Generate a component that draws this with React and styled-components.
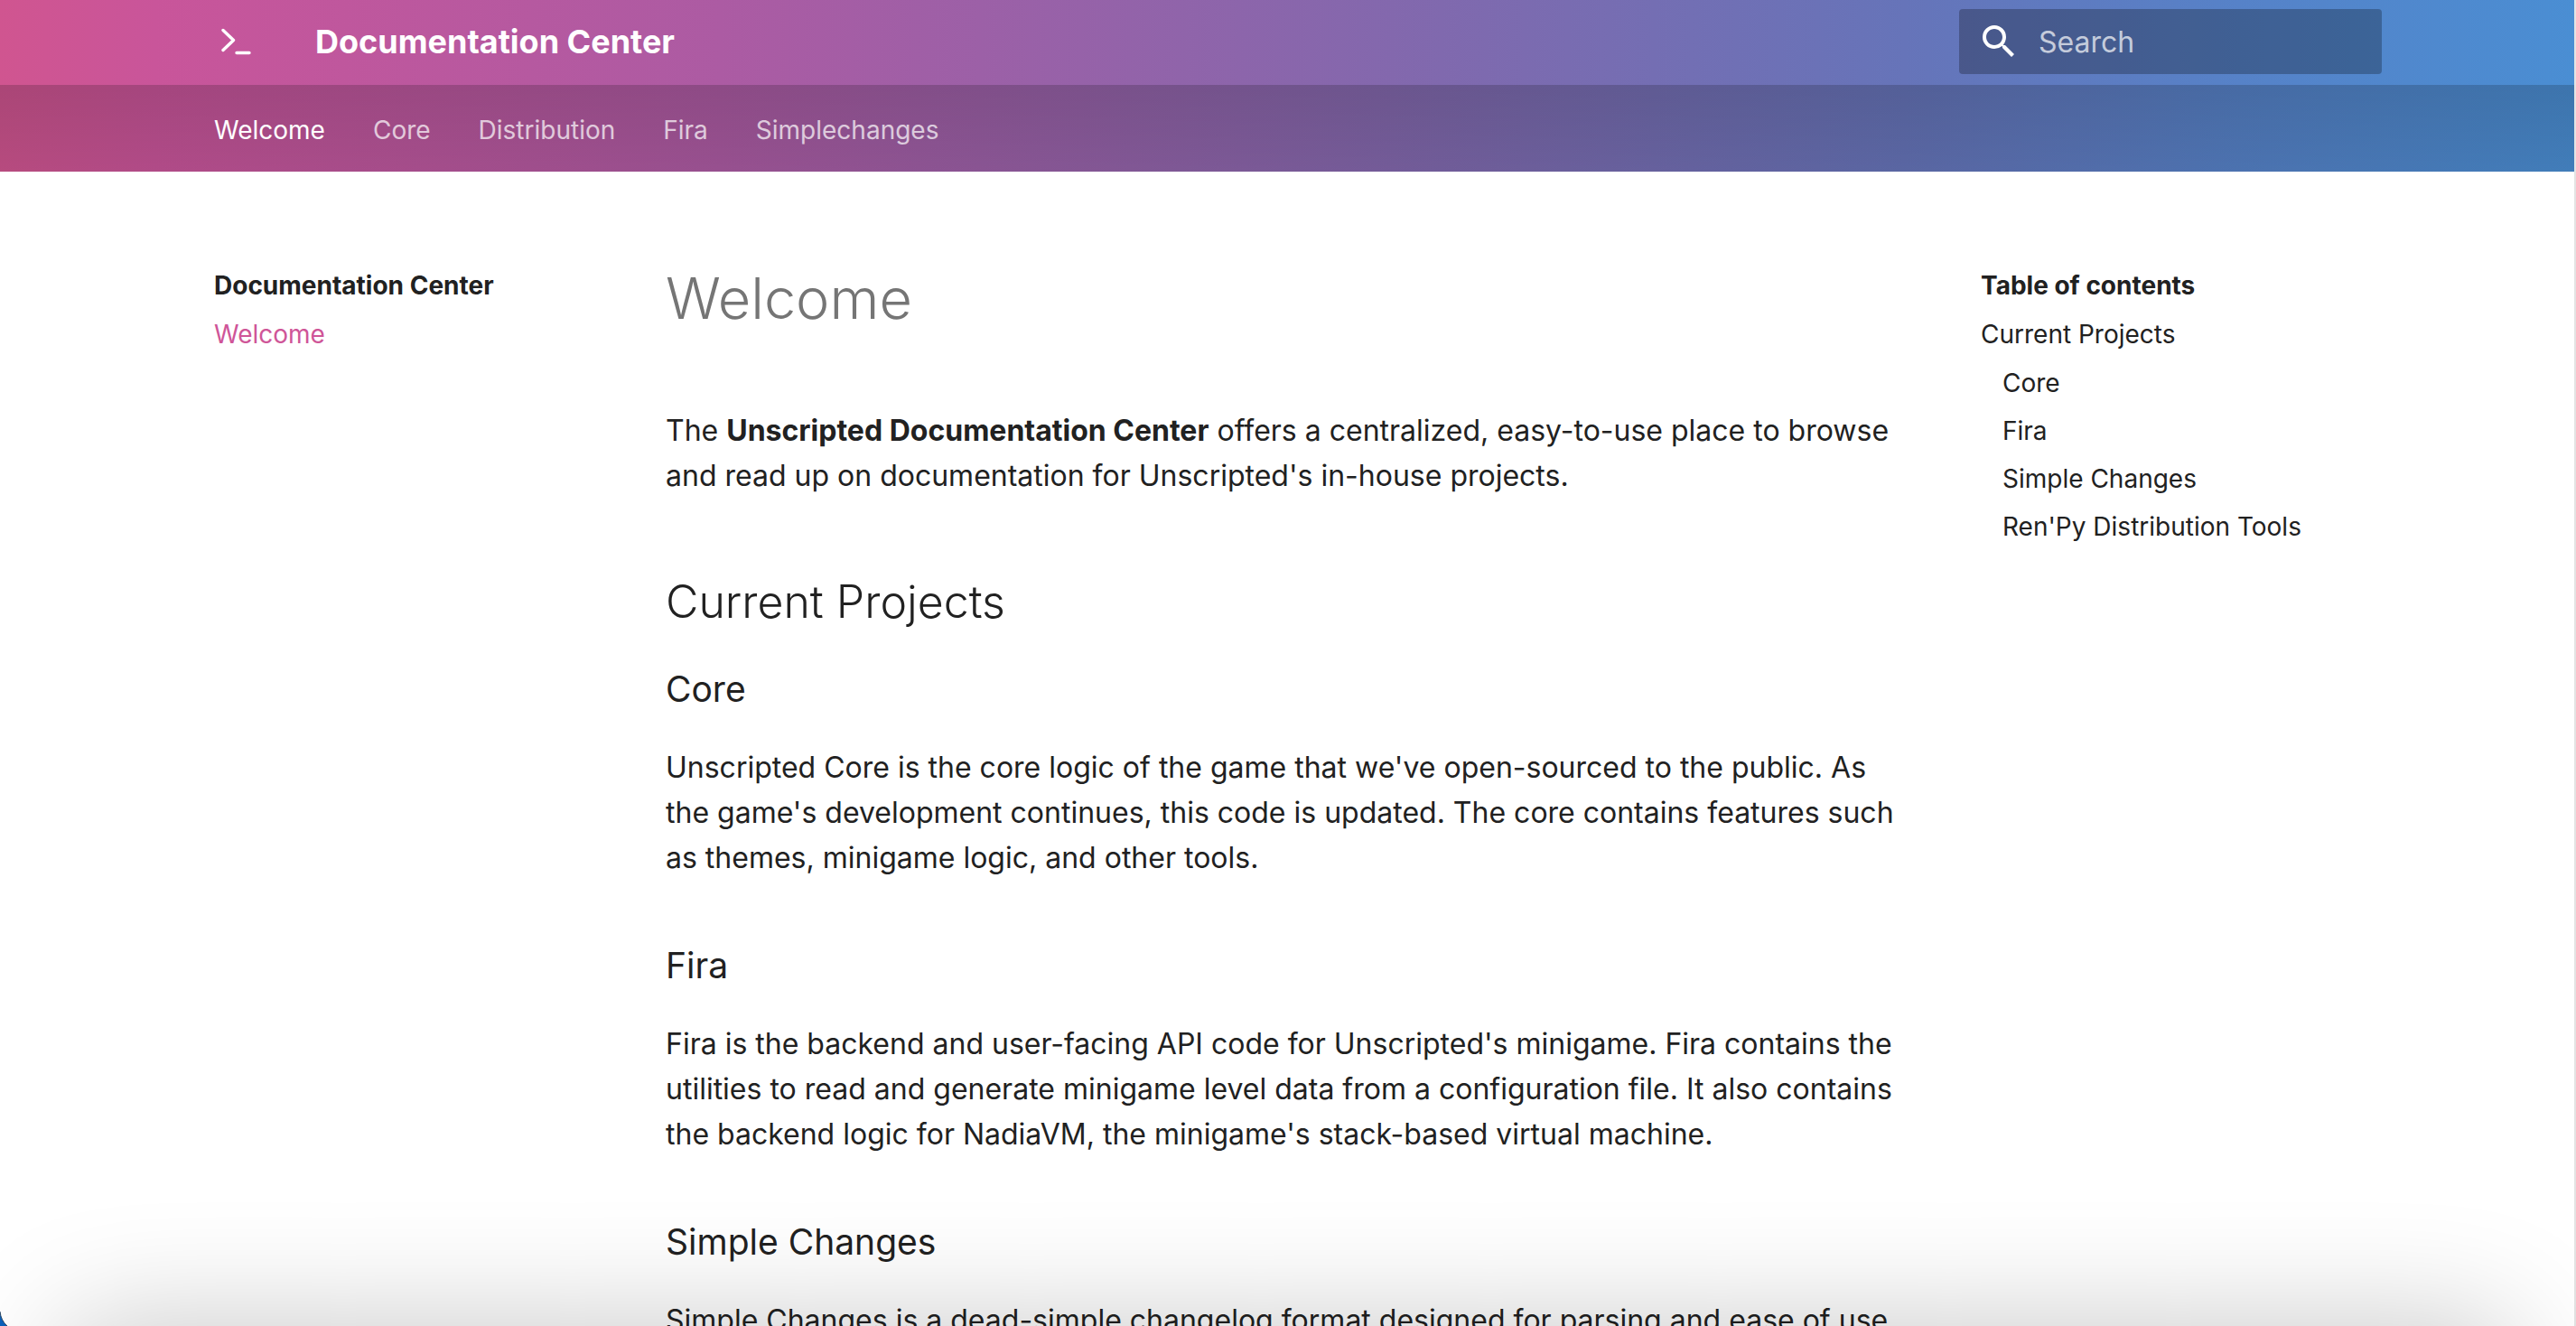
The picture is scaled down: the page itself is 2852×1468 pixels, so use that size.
import React from "react";
import styled, { createGlobalStyle } from "styled-components";

const GlobalStyle = createGlobalStyle`
  * { box-sizing: border-box; }
  html, body { margin: 0; background: #fff; }
  body {
    font-family: Inter, "Liberation Sans", sans-serif;
    color: #212121;
    -webkit-font-smoothing: antialiased;
  }
`;

const Page = styled.div`
  height: 100vh;
  overflow-y: auto;
  scrollbar-width: none;
  border-right: 2px solid #e4e4e4;
`;

const Banner = styled.div`
  background: linear-gradient(
    90deg,
    #d05590 0%,
    #c9559a 6%,
    #ac5ba3 28%,
    #8069ae 56%,
    #6674b9 74%,
    #5682c8 87%,
    #4a8ed3 100%
  );
`;

const Grid = styled.div`
  max-width: 2440px;
  margin: 0 auto;
`;

const Header = styled(Grid).attrs({ as: "header" })`
  display: flex;
  align-items: center;
  height: 94px;
  padding: 0 8px 2px 32px;
`;

const LogoLink = styled.a`
  display: flex;
  color: #fff;
  margin-right: 64px;
`;

const SiteTitle = styled.span`
  flex: 1;
  color: #fff;
  font-size: 36px;
  font-weight: 700;
  line-height: 48px;
`;

const SearchBox = styled.label`
  display: flex;
  align-items: center;
  gap: 20px;
  width: 468px;
  height: 72px;
  padding: 0 20px;
  border-radius: 4px;
  background: rgba(0, 0, 0, 0.26);
  color: #fff;

  svg {
    flex: none;
  }
`;

const SearchInput = styled.input`
  flex: 1;
  min-width: 0;
  border: 0;
  padding: 0;
  outline: none;
  background: transparent;
  color: #fff;
  font: inherit;
  font-size: 32px;

  &::placeholder {
    color: rgba(255, 255, 255, 0.7);
    opacity: 1;
  }
`;

const TabBar = styled.nav`
  background: linear-gradient(rgba(0, 0, 0, 0.18), rgba(0, 0, 0, 0.12));
`;

const TabList = styled(Grid).attrs({ as: "ul" })`
  display: flex;
  align-items: center;
  gap: 53px;
  height: 96px;
  padding: 4px 32px 0;
  list-style: none;
`;

const Tab = styled.a`
  color: #fff;
  opacity: ${(p) => (p.$active ? 1 : 0.7)};
  font-size: 28px;
  line-height: 36px;
  text-decoration: none;
`;

const Main = styled(Grid)`
  display: grid;
  grid-template-columns: 484px minmax(0, 1fr) 484px;
  align-items: start;
`;

const Sidebar = styled.nav`
  padding: 108px 32px 0;
  font-size: 28px;
  line-height: 36px;
`;

const SidebarTitle = styled.h2`
  margin: 0 0 18px;
  font-size: 28px;
  font-weight: 700;
  line-height: 36px;
`;

const LinkList = styled.ul`
  display: flex;
  flex-direction: column;
  gap: ${(p) => (p.$nested ? 17 : 18)}px;
  margin: ${(p) => (p.$nested ? "18px 0 0" : 0)};
  padding: 0 0 0 ${(p) => (p.$nested ? 24 : 0)}px;
  list-style: none;
`;

const NavLink = styled.a`
  display: block;
  color: ${(p) => (p.$active ? "#cf5598" : "#212121")};
  text-decoration: none;
`;

const Article = styled.article`
  padding: 99px 48px 48px;
`;

const PageTitle = styled.h1`
  margin: 0 0 80px;
  color: #757575;
  font-size: 63px;
  font-weight: 300;
  line-height: 83px;
`;

const SectionTitle = styled.h2`
  margin: 79px 0 32px;
  font-size: 50px;
  font-weight: 300;
  line-height: 70px;
`;

const ProjectTitle = styled.h3`
  margin: 0 0 32px;
  font-size: 39px;
  font-weight: 400;
  line-height: 60px;

  p + & {
    margin-top: 64px;
  }
`;

const Text = styled.p`
  margin: 0;
  font-size: 32px;
  line-height: 50px;
`;

const BottomShade = styled.div`
  position: fixed;
  left: 75px;
  right: 75px;
  top: 100vh;
  height: 200px;
  box-shadow: 0 0 136px rgba(0, 0, 0, 0.23);
  pointer-events: none;
`;

const WindowCorner = styled.svg`
  position: fixed;
  left: 0;
  bottom: 0;
`;

const tabs = ["Welcome", "Core", "Distribution", "Fira", "Simplechanges"];

const contents = ["Core", "Fira", "Simple Changes", "Ren'Py Distribution Tools"];

const projects = [
  {
    name: "Core",
    text: "Unscripted Core is the core logic of the game that we've open-sourced to the public. As the game's development continues, this code is updated. The core contains features such as themes, minigame logic, and other tools.",
  },
  {
    name: "Fira",
    text: "Fira is the backend and user-facing API code for Unscripted's minigame. Fira contains the utilities to read and generate minigame level data from a configuration file. It also contains the backend logic for NadiaVM, the minigame's stack-based virtual machine.",
  },
  {
    name: "Simple Changes",
    text: "Simple Changes is a dead-simple changelog format designed for parsing and ease of use",
  },
];

const slug = (name) => name.toLowerCase().replace(/[^a-z]+/g, "-");

const PromptIcon = () => (
  <svg
    width="48"
    height="48"
    viewBox="0 0 48 48"
    fill="none"
    stroke="currentColor"
    strokeWidth="3.4"
    strokeLinecap="round"
    strokeLinejoin="round"
    aria-hidden="true"
  >
    <path d="M10 11.5 21.5 22.500 10 33.500M25 36.500H39" />
  </svg>
);

const SearchIcon = () => (
  <svg width="48" height="48" viewBox="0 0 24 24" fill="currentColor" aria-hidden="true">
    <path d="M9.5 3A6.5 6.5 0 0 1 16 9.5c0 1.610-.59 3.090-1.560 4.230l.27.27h.79l5 5-1.500 1.500-5-5v-.79l-.27-.27A6.516 6.516 0 0 1 9.500 16 6.500 6.500 0 0 1 3 9.500 6.500 6.500 0 0 1 9.500 3m0 2C7 5 5 7 5 9.500S7 14 9.500 14 14 12 14 9.500 12 5 9.500 5z" />
  </svg>
);

export default function App() {
  return (
    <>
      <GlobalStyle />
      <Page>
        <Banner>
          <Header>
            <LogoLink href="#welcome" aria-label="Documentation Center">
              <PromptIcon />
            </LogoLink>
            <SiteTitle>Documentation Center</SiteTitle>
            <SearchBox htmlFor="search">
              <SearchIcon />
              <SearchInput id="search" type="text" placeholder="Search" aria-label="Search" />
            </SearchBox>
          </Header>
          <TabBar aria-label="Tabs">
            <TabList>
              {tabs.map((name, i) => (
                <li key={name}>
                  <Tab href={`#${slug(name)}`} $active={i === 0}>
                    {name}
                  </Tab>
                </li>
              ))}
            </TabList>
          </TabBar>
        </Banner>
        <Main>
          <Sidebar aria-label="Navigation">
            <SidebarTitle>Documentation Center</SidebarTitle>
            <LinkList>
              <li>
                <NavLink href="#welcome" $active>
                  Welcome
                </NavLink>
              </li>
            </LinkList>
          </Sidebar>
          <Article>
            <PageTitle id="welcome">Welcome</PageTitle>
            <Text>
              The <strong>Unscripted Documentation Center</strong> offers a centralized, easy-to-use
              place to browse and read up on documentation for Unscripted's in-house projects.
            </Text>
            <SectionTitle id="current-projects">Current Projects</SectionTitle>
            {projects.map((project) => (
              <React.Fragment key={project.name}>
                <ProjectTitle id={slug(project.name)}>{project.name}</ProjectTitle>
                <Text>{project.text}</Text>
              </React.Fragment>
            ))}
          </Article>
          <Sidebar aria-label="Table of contents">
            <SidebarTitle>Table of contents</SidebarTitle>
            <LinkList>
              <li>
                <NavLink href="#current-projects">Current Projects</NavLink>
                <LinkList $nested>
                  {contents.map((name) => (
                    <li key={name}>
                      <NavLink href={`#${slug(name)}`}>{name}</NavLink>
                    </li>
                  ))}
                </LinkList>
              </li>
            </LinkList>
          </Sidebar>
        </Main>
      </Page>
      <BottomShade />
      <WindowCorner width="8" height="16" viewBox="0 0 8 16" aria-hidden="true">
        <path d="M0 0Q1 10 8 16H0Z" fill="#0a5fb8" />
        <path d="M0 0Q1 10 8 16" fill="none" stroke="#2b4560" />
      </WindowCorner>
    </>
  );
}
